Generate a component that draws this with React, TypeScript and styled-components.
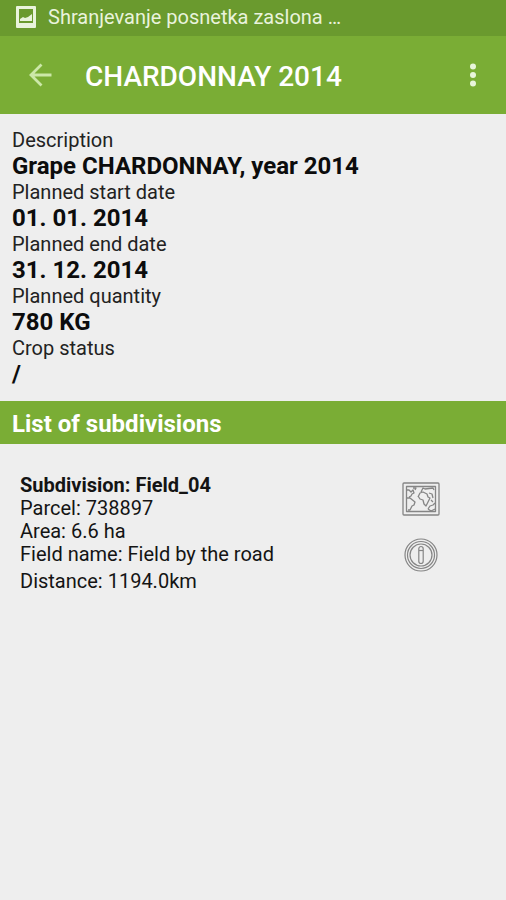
import React from "react";
import styled, { createGlobalStyle } from "styled-components";

const GlobalStyle = createGlobalStyle`
  * { box-sizing: border-box; }
  html { background: #eeeeee; }
  body {
    margin: 0;
    color: #0c0c0c;
    font-family: Roboto, "Liberation Sans", sans-serif;
  }
`;

const Screen = styled.div`
  min-height: 100vh;
  background: #eeeeee;
`;

const StatusBar = styled.div`
  display: flex;
  align-items: center;
  gap: 12px;
  height: 36px;
  padding: 0 16px 2px;
  background: #6a9a2e;
  color: #e9f3dc;
  font-size: 20px;
  line-height: 24px;
  white-space: nowrap;

  svg { flex: none; }
`;

const StatusText = styled.span`
  overflow: hidden;
  text-overflow: ellipsis;
`;

const Toolbar = styled.header`
  display: flex;
  align-items: center;
  height: 78px;
  padding: 0 13px 0 20px;
  background: #7aad35;
  color: #ffffff;
`;

const IconButton = styled.button<{ $tone: string }>`
  display: flex;
  flex: none;
  align-items: center;
  justify-content: center;
  width: 40px;
  height: 48px;
  padding: 0;
  border: 0;
  background: none;
  color: ${(p) => p.$tone};
  cursor: pointer;
`;

const Title = styled.h1`
  flex: 1;
  margin: 0 0 0 25px;
  padding-top: 4px;
  font-size: 28px;
  line-height: 32px;
  font-weight: 500;
`;

const Details = styled.dl`
  margin: 0;
  padding: 13px 12px 14px;
`;

const Label = styled.dt`
  font-size: 20px;
  line-height: 26px;
  color: #222222;
`;

const Value = styled.dd`
  margin: 0;
  font-size: 24px;
  line-height: 26px;
  font-weight: 700;
`;

const SectionTitle = styled.h2`
  margin: 0;
  padding: 9px 12px 6px;
  background: #7aad35;
  color: #ffffff;
  font-size: 24px;
  line-height: 28px;
  font-weight: 700;
`;

const Subdivision = styled.article`
  display: grid;
  grid-template-columns: 1fr 92px;
  padding: 29px 39px 20px 20px;
`;

const Facts = styled.div`
  font-size: 20px;
  line-height: 23px;
  color: #141414;
`;

const FactTitle = styled.h3`
  margin: 0;
  font-size: 20px;
  line-height: 24px;
  font-weight: 700;
`;

const Fact = styled.p<{ $spaced?: boolean }>`
  margin: ${(p) => (p.$spaced ? "4px" : "0")} 0 0;
`;

const Actions = styled.div`
  display: flex;
  flex-direction: column;
  align-items: center;
  gap: 8px;
  padding-top: 2px;
`;

const details = [
  ["Description", "Grape CHARDONNAY, year 2014"],
  ["Planned start date", "01. 01. 2014"],
  ["Planned end date", "31. 12. 2014"],
  ["Planned quantity", "780 KG"],
  ["Crop status", "/"],
];

const PictureIcon = () => (
  <svg width="20" height="22" viewBox="0 0 20 22" aria-hidden="true">
    <path fill="#e9f3dc" fillRule="evenodd" d="M1 0h18a1 1 0 0 1 1 1v20a1 1 0 0 1-1 1H1a1 1 0 0 1-1-1V1a1 1 0 0 1 1-1zM3 3v14h14V3z" />
    <path fill="#e9f3dc" d="M4 15v-2l3-2 2 1 3-1 4-3v7z" />
  </svg>
);

const BackIcon = () => (
  <svg width="24" height="24" viewBox="0 0 24 24" fill="none" stroke="currentColor" strokeWidth="2.8" aria-hidden="true">
    <path d="M23.5 12H3M13.5 1.5 3 12l10.5 10.5" />
  </svg>
);

const MoreIcon = () => (
  <svg width="8" height="24" viewBox="0 0 8 24" fill="currentColor" aria-hidden="true">
    <circle cx="4" cy="3.5" r="3" />
    <circle cx="4" cy="12" r="3" />
    <circle cx="4" cy="20.5" r="3" />
  </svg>
);

const MapIcon = () => (
  <svg width="38" height="34" viewBox="0 0 38 34" fill="none" stroke="currentColor" strokeWidth="1.3" strokeLinejoin="round" aria-hidden="true">
    <rect x="1" y="1" width="36" height="32" rx="1" />
    <rect x="4.5" y="4.5" width="29" height="25" />
    <path d="M5 8l2 0 2 2 2-2 1 3-2 1-1 2-2 1M5 16l3 0 5 4-1 3-2 1-2 4-2 0M11 6l3 0-1 2M19 10l2-4 2 1 8-1 1 2M16 15l2-4 3-1 4 2 1 3 2 1-2 4-2 4-2-2-1-4-3-1-2-3M27 11l3 1 1 4M29 18l2 2M26 27l2-3 3-1 2-2M26 27l3 2 4-2" />
  </svg>
);

const InfoIcon = () => (
  <svg width="34" height="34" viewBox="0 0 34 34" fill="none" stroke="currentColor" strokeWidth="1.2" aria-hidden="true">
    <circle cx="17" cy="17" r="16" />
    <circle cx="17" cy="17" r="13.5" />
    <circle cx="17" cy="17" r="11" />
    <rect x="14.8" y="8.5" width="4.4" height="17" rx="2.2" />
    <path d="M15 12.5h4" />
  </svg>
);

export default function App() {
  return (
    <Screen>
      <GlobalStyle />
      <StatusBar>
        <PictureIcon />
        <StatusText>Shranjevanje posnetka zaslona …</StatusText>
      </StatusBar>
      <Toolbar>
        <IconButton $tone="#cce8a8" aria-label="Back"><BackIcon /></IconButton>
        <Title>CHARDONNAY 2014</Title>
        <IconButton $tone="#e8f5da" aria-label="More options"><MoreIcon /></IconButton>
      </Toolbar>
      <main>
        <Details>
          {details.map(([label, value]) => (
            <React.Fragment key={label}>
              <Label>{label}</Label>
              <Value>{value}</Value>
            </React.Fragment>
          ))}
        </Details>
        <SectionTitle>List of subdivisions</SectionTitle>
        <Subdivision>
          <Facts>
            <FactTitle>Subdivision: Field_04</FactTitle>
            <Fact>Parcel: 738897</Fact>
            <Fact>Area: 6.6 ha</Fact>
            <Fact>Field name: Field by the road</Fact>
            <Fact $spaced>Distance: 1194.0km</Fact>
          </Facts>
          <Actions>
            <IconButton $tone="#858585" aria-label="Show on map"><MapIcon /></IconButton>
            <IconButton $tone="#858585" aria-label="Information"><InfoIcon /></IconButton>
          </Actions>
        </Subdivision>
      </main>
    </Screen>
  );
}
